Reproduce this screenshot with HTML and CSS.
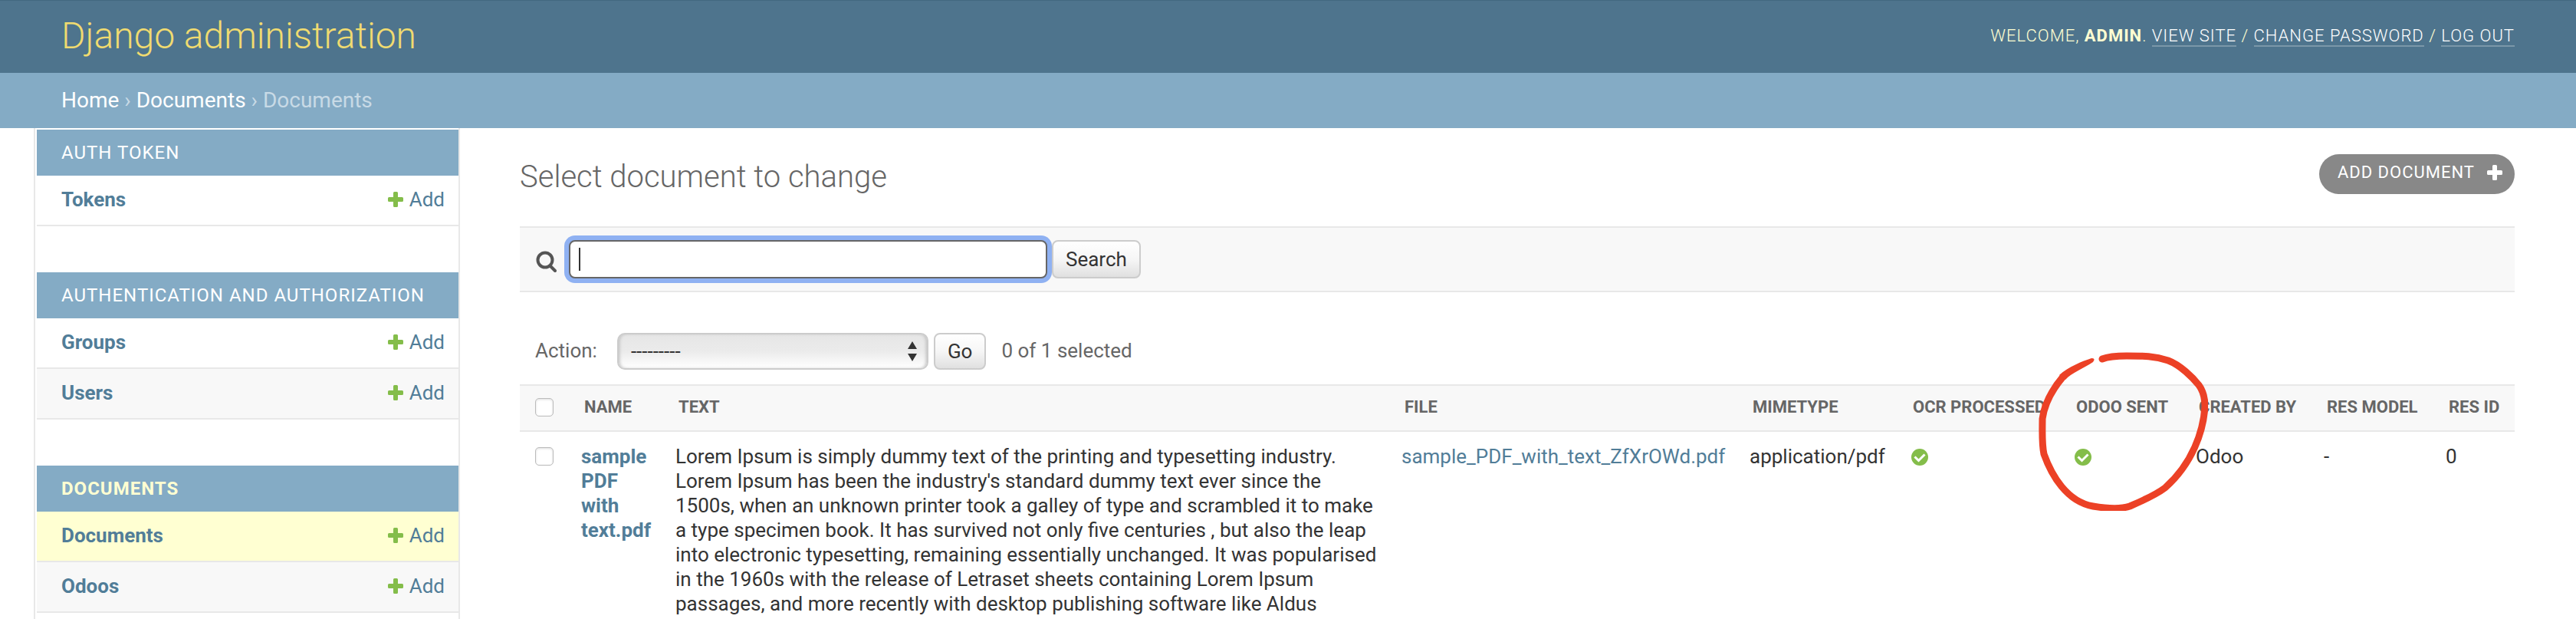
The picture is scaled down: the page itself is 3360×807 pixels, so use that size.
FILE: index.html
```html
<!DOCTYPE html>
<html lang="en">
<head>
<meta charset="utf-8">
<title>Select document to change | Django site admin</title>
<link rel="stylesheet" href="styles.css">
</head>
<body>
<svg class="defs" aria-hidden="true">
  <symbol id="plus" viewBox="0 0 20 20"><path d="M8.5 0h3q1.500 0 1.500 1.500V7h5.500Q20 7 20 8.500v3q0 1.500-1.500 1.500H13v5.500q0 1.500-1.500 1.500h-3Q7 20 7 18.500V13H1.500Q0 13 0 11.500v-3Q0 7 1.500 7H7V1.500Q7 0 8.500 0z"/></symbol>
  <symbol id="yes" viewBox="0 0 22 22"><circle cx="11" cy="11" r="11"/><path class="tick" d="M4.500 10.500l5 5 8-8" /></symbol>
</svg>

<header class="header">
  <h1 class="branding"><a href="#">Django administration</a></h1>
  <nav class="user-tools">Welcome, <strong>admin</strong>. <a href="#">View site</a> / <a href="#">Change password</a> / <a href="#">Log out</a></nav>
</header>

<nav class="breadcrumbs"><a href="#">Home</a> › <a href="#">Documents</a> › Documents</nav>

<div class="main">
  <nav class="sidebar">
    <section class="module">
      <h2 class="caption"><a href="#">Auth Token</a></h2>
      <div class="model"><a class="model-name" href="#">Tokens</a><a class="add" href="#"><svg class="plus"><use href="#plus"/></svg>Add</a></div>
    </section>
    <section class="module">
      <h2 class="caption"><a href="#">Authentication and Authorization</a></h2>
      <div class="model"><a class="model-name" href="#">Groups</a><a class="add" href="#"><svg class="plus"><use href="#plus"/></svg>Add</a></div>
      <div class="model alt"><a class="model-name" href="#">Users</a><a class="add" href="#"><svg class="plus"><use href="#plus"/></svg>Add</a></div>
    </section>
    <section class="module">
      <h2 class="caption current"><a href="#">Documents</a></h2>
      <div class="model current"><a class="model-name" href="#">Documents</a><a class="add" href="#"><svg class="plus"><use href="#plus"/></svg>Add</a></div>
      <div class="model alt"><a class="model-name" href="#">Odoos</a><a class="add" href="#"><svg class="plus"><use href="#plus"/></svg>Add</a></div>
    </section>
  </nav>

  <main class="content">
    <div class="title-row">
      <h2 class="title">Select document to change</h2>
      <a class="add-button" href="#">Add document<svg class="plus"><use href="#plus"/></svg></a>
    </div>

    <form class="toolbar">
      <label for="searchbar" aria-label="Search documents"><svg class="search-icon" viewBox="0 0 28 28"><circle cx="13" cy="12" r="9.500"/><path d="M20 20l6 6"/></svg></label>
      <span class="search-field">
        <input class="searchbar" id="searchbar" type="text">
        <span class="caret"></span>
      </span>
      <button class="button" type="submit">Search</button>
    </form>

    <div class="actions">
      <label for="action">Action:</label>
      <span class="select-wrap">
        <select id="action" class="select"><option>---------</option></select>
        <svg class="arrows" viewBox="0 0 12 26"><path d="M6 0l6 10H0zM0 16h12L6 26z"/></svg>
      </span>
      <button class="button go" type="button">Go</button>
      <span class="counter">0 of 1 selected</span>
    </div>

    <div class="results">
      <table class="result-list">
        <colgroup><col class="c-check"><col class="c-name"><col><col class="c-file"><col class="c-mime"><col class="c-ocr"><col class="c-sent"><col class="c-by"><col class="c-model"><col class="c-id"></colgroup>
        <thead>
          <tr>
            <th><input class="check" type="checkbox" aria-label="Select all"></th>
            <th>Name</th><th>Text</th><th>File</th><th>Mimetype</th><th>OCR processed</th>
            <th><span class="marked">Odoo sent<svg class="marker" viewBox="0 0 224 212" aria-hidden="true">
              <path d="M86 14C96 10 108 10 118 10C140 10 154 10 172 16C188 22 204 38 212 48C218 56 220 64 220 76C218 108 204 150 168 182C156 191 136 200 122 206C110 210 92 209 74 206C40 200 20 166 10 138C7 124 8 108 8 92C11 70 24 50 35 37"/>
              <path class="taper" d="M30 35C42 24 60 17 72 13Q78 13 74 18C62 26 46 32 38 41z"/>
            </svg></span></th>
            <th>Created by</th><th>Res model</th><th>Res id</th>
          </tr>
        </thead>
        <tbody>
          <tr>
            <td><input class="check" type="checkbox" aria-label="Select sample PDF with text.pdf"></td>
            <td class="name"><a href="#">sample PDF with text.pdf</a></td>
            <td>Lorem Ipsum is simply dummy text of the printing and typesetting industry. Lorem Ipsum has been the industry's standard dummy text ever since the 1500s, when an unknown printer took a galley of type and scrambled it to make a type specimen book. It has survived not only five centuries , but also the leap into electronic typesetting, remaining essentially unchanged. It was popularised in the 1960s with the release of Letraset sheets containing Lorem Ipsum passages, and more recently with desktop publishing software like Aldus</td>
            <td><a href="#">sample_PDF_with_text_ZfXrOWd.pdf</a></td>
            <td>application/pdf</td>
            <td><svg class="yes" role="img" aria-label="True"><use href="#yes"/></svg></td>
            <td><svg class="yes" role="img" aria-label="True"><use href="#yes"/></svg></td>
            <td>Odoo</td><td>-</td><td>0</td>
          </tr>
        </tbody>
      </table>
    </div>
  </main>
</div>
</body>
</html>
```

FILE: styles.css
```css
* { box-sizing: border-box; }

body {
  margin: 0;
  min-height: 100vh;
  display: flex;
  flex-direction: column;
  background: #fff;
  color: #333;
  font: 26px/32px Roboto, "Liberation Sans", sans-serif;
}

a { color: #517d98; text-decoration: none; }
h1, h2 { margin: 0; }
.defs { position: absolute; width: 0; height: 0; }

.header {
  display: flex;
  justify-content: space-between;
  align-items: center;
  height: 95px;
  padding: 0 80px 3px;
  border-top: 1px solid #426880;
  background: #4e748d;
}
.branding { font-size: 48px; font-weight: 300; line-height: 56px; }
.branding a { color: #f0db70; }

.user-tools {
  color: #ffffd2;
  font-size: 22px;
  font-weight: 300;
  letter-spacing: 1px;
  text-transform: uppercase;
}
.user-tools strong { font-weight: 700; }
.user-tools a { color: #fff; border-bottom: 2px solid rgba(255, 255, 255, .25); }

.breadcrumbs {
  padding: 20px 80px;
  background: #84abc5;
  color: #c8dae6;
  font-size: 28px;
}
.breadcrumbs a { color: #fff; }

.main { display: flex; flex: 1; }

.sidebar {
  flex: none;
  width: 556px;
  margin-left: 44px;
  padding: 2px 0 0 2px;
  border: solid #e8e8e8;
  border-width: 0 2px;
}
.module { margin-bottom: 60px; }
.module:last-child { margin-bottom: 0; }
.caption {
  padding: 14px 32px;
  background: #84abc5;
  font-size: 24px;
  font-weight: 400;
  letter-spacing: 1px;
  text-transform: uppercase;
}
.caption a { color: #fff; }
.caption.current { font-weight: 700; }
.caption.current a { color: #ffffd2; }
.model {
  display: flex;
  justify-content: space-between;
  padding: 15px 18px 17px 32px;
  border-bottom: 2px solid #e8e8e8;
}
.model.alt { background: #f8f8f8; }
.model.current { background: #ffffd2; }
.model-name { font-weight: 700; }
.add { display: flex; align-items: center; gap: 8px; }
.plus { width: 20px; height: 20px; fill: #84bd4a; }

.content { flex: 1; min-width: 0; padding: 34px 80px 0 78px; }
.title-row { display: flex; justify-content: space-between; align-items: flex-start; }
.title { padding-top: 6px; color: #666; font-size: 40px; font-weight: 300; line-height: 48px; }
.add-button {
  display: flex;
  align-items: center;
  gap: 16px;
  padding: 8px 16px 12px 24px;
  border-radius: 26px;
  background: #888;
  color: #fff;
  font-size: 22px;
  letter-spacing: 1px;
  text-transform: uppercase;
}
.add-button .plus { fill: #fff; }

.toolbar {
  display: flex;
  align-items: center;
  margin-top: 40px;
  padding: 16px 20px;
  border: solid #e8e8e8;
  border-width: 2px 0;
  background: #f8f8f8;
}
.toolbar label { display: flex; padding: 6px 16px 0 0; }
.search-icon { width: 28px; height: 28px; fill: none; stroke: #555; stroke-width: 4; stroke-linecap: round; }
.search-field { position: relative; margin-right: 6px; }
.searchbar {
  display: block;
  width: 624px;
  height: 50px;
  padding: 4px 10px;
  border: 2px solid #666;
  border-radius: 8px;
  outline: none;
  box-shadow: 0 0 0 6px #8fb1f2;
  color: #333;
  font: 28px/32px Roboto, sans-serif;
}
.caret { position: absolute; top: 10px; left: 13px; width: 2px; height: 30px; background: #333; }
.button {
  height: 50px;
  padding: 0 16px;
  border: 2px solid #ccc;
  border-radius: 8px;
  background: linear-gradient(#fff, #f6f6f6 50%, #e0e0e0);
  color: #333;
  font: 26px/32px Roboto, sans-serif;
}

.actions {
  display: flex;
  align-items: center;
  padding: 53px 20px 19px;
  color: #666;
}
.actions label, .counter { padding-bottom: 2px; }
.select-wrap { position: relative; margin: 0 7px 0 26px; }
.select {
  display: block;
  appearance: none;
  width: 406px;
  height: 48px;
  padding: 0 16px;
  border: 2px solid #ccc;
  border-radius: 10px;
  background: linear-gradient(#e6e6e6, #ebebeb 50%, #fff);
  box-shadow: inset 3px 0 4px -2px #bbb, inset -3px 0 4px -2px #bbb;
  color: #333;
  font: 26px/32px Roboto, sans-serif;
}
.arrows { position: absolute; top: 11px; right: 15px; width: 12px; height: 26px; fill: #333; pointer-events: none; }
.go { height: 48px; }
.counter { margin-left: 20px; }

.result-list { width: 100%; table-layout: fixed; border-collapse: separate; border-spacing: 0; }
.c-check { width: 64px; }
.c-name { width: 123px; }
.c-file { width: 454px; }
.c-mime { width: 209px; }
.c-ocr { width: 213px; }
.c-sent { width: 160px; }
.c-by { width: 167px; }
.c-model { width: 159px; }
.c-id { width: 106px; }
th {
  height: 62px;
  padding: 0 0 2px 20px;
  border: solid #e8e8e8;
  border-width: 2px 0;
  background: #f8f8f8;
  color: #666;
  font-size: 22px;
  font-weight: 700;
  text-align: left;
  text-transform: uppercase;
  white-space: nowrap;
}
td { padding: 16px; vertical-align: top; }
td:first-child { padding-left: 20px; }
.name { font-weight: 700; }
.check {
  display: block;
  appearance: none;
  width: 24px;
  height: 24px;
  margin: 0;
  border: 1px solid #bbb;
  border-radius: 5px;
  background: #fff;
  box-shadow: inset 0 1px 3px #ddd;
}
td .check { margin-top: 4px; }
.yes { display: block; width: 22px; height: 22px; margin: 6px 0 0 2px; fill: #84bd4a; }
.tick { fill: none; stroke: #fff; stroke-width: 3; }

/* Hand-drawn ring around the "Odoo sent" column */
.marked { position: relative; }
.marker {
  position: absolute;
  top: -64px;
  left: -52px;
  width: 224px;
  height: 212px;
  fill: none;
  stroke: #ec4126;
  stroke-width: 9;
  stroke-linecap: round;
  stroke-linejoin: round;
  pointer-events: none;
}
.taper { fill: #ec4126; stroke: none; }
```
